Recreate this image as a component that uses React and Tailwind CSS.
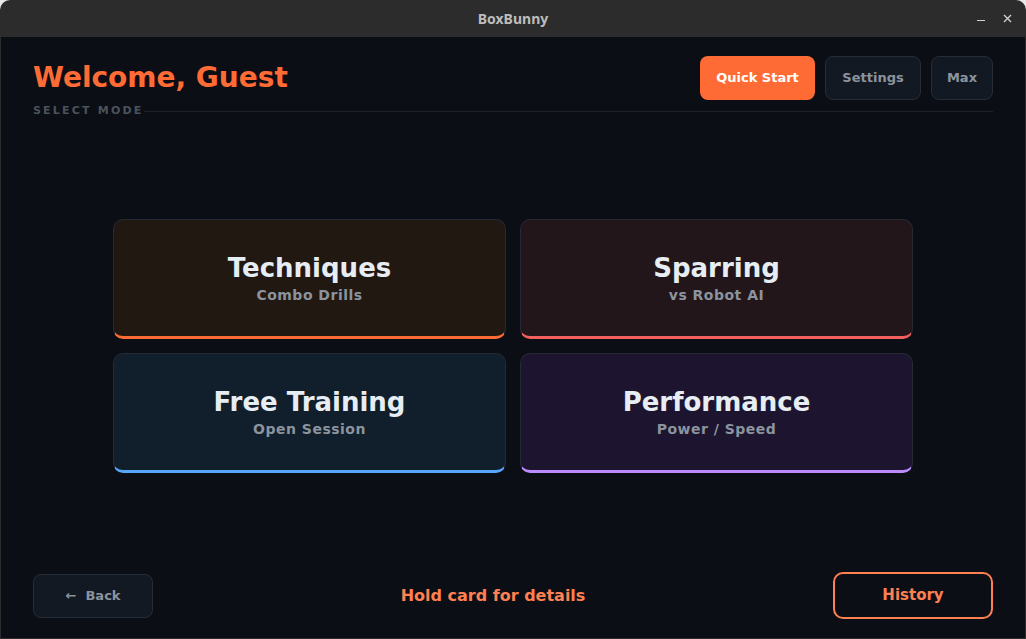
import React from "react";

const cards = [
  {
    title: "Techniques",
    sub: "Combo Drills",
    bg: "bg-[#221812]",
    border: "border-b-[#ff6b35]",
  },
  {
    title: "Sparring",
    sub: "vs Robot AI",
    bg: "bg-[#22161a]",
    border: "border-b-[#f25f5c]",
  },
  {
    title: "Free Training",
    sub: "Open Session",
    bg: "bg-[#111e2c]",
    border: "border-b-[#58a6ff]",
  },
  {
    title: "Performance",
    sub: "Power / Speed",
    bg: "bg-[#1d1530]",
    border: "border-b-[#bc8cff]",
  },
];

const ModeCard = ({ title, sub, bg, border }) => (
  <div
    className={`flex h-[120px] flex-col items-center justify-center rounded-[10px] border border-[#262a33] border-b-[3px] ${border} ${bg}`}
  >
    <div className="text-[26px] font-bold leading-[32px] text-[#e6edf3]">{title}</div>
    <div className="mt-[2px] text-[14px] font-bold leading-[18px] tracking-[0.5px] text-[#8b949e]">{sub}</div>
  </div>
);

export default function App() {
  return (
    <div className="h-[639px] w-[1026px] bg-[#e9e9e9] font-['DejaVu_Sans',sans-serif]">
      <div className="flex h-full flex-col overflow-hidden rounded-t-[10px] bg-[#2c2c2c]">
        {/* title bar */}
        <div className="relative flex h-[37px] shrink-0 items-center justify-center">
          <span className="font-['Noto_Sans',sans-serif] text-[14px] font-bold text-[#bdbdbd]">BoxBunny</span>
          <div className="absolute right-[14px] top-0 flex h-full items-center gap-[18px] text-[#cfcfcf]">
            <span className="mt-[4px] block h-[1.5px] w-[8px] bg-[#cfcfcf]" />
            <svg width="9" height="9" viewBox="0 0 9 9">
              <path d="M1 1 L8 8 M8 1 L1 8" stroke="#cfcfcf" strokeWidth="1.4" />
            </svg>
          </div>
        </div>

        {/* main */}
        <div className="mx-[1px] mb-[1px] flex flex-1 flex-col bg-[#0b0e14] px-[32px] pb-[19px] pt-[19px]">
          <div className="flex items-center justify-between">
            <h1 className="text-[28px] font-bold leading-[34px] text-[#ff6b35]">Welcome, Guest</h1>
            <div className="flex gap-[10px]">
              <button className="h-[44px] w-[115px] rounded-[8px] bg-[#ff6b35] text-[13px] font-bold text-white">
                Quick Start
              </button>
              <button className="h-[44px] w-[96px] rounded-[8px] border border-[#272d36] bg-[#131922] text-[13px] font-bold text-[#8b949e]">
                Settings
              </button>
              <button className="h-[44px] w-[62px] rounded-[8px] border border-[#272d36] bg-[#131922] text-[13px] font-bold text-[#8b949e]">
                Max
              </button>
            </div>
          </div>

          <div className="mt-[3px] flex items-center">
            <span className="text-[11px] font-bold tracking-[2.2px] text-[#4a525c]">SELECT MODE</span>
            <div className="h-px flex-1 bg-[#1e232b]" />
          </div>

          <div className="flex flex-1 items-center justify-center">
            <div className="grid grid-cols-[393px_393px] gap-[14px]">
              {cards.map((c) => (
                <ModeCard key={c.title} {...c} />
              ))}
            </div>
          </div>

          <div className="flex items-center justify-between">
            <button className="h-[44px] w-[120px] rounded-[8px] border border-[#272d36] bg-[#131922] text-[13px] font-bold text-[#8b949e]">
              ←&nbsp; Back
            </button>
            <span className="text-[16px] font-bold text-[#ff8050]">Hold card for details</span>
            <button className="h-[47px] w-[160px] rounded-[10px] border-2 border-[#ff8050] text-[15px] font-bold text-[#ff8050]">
              History
            </button>
          </div>
        </div>
      </div>
    </div>
  );
}
